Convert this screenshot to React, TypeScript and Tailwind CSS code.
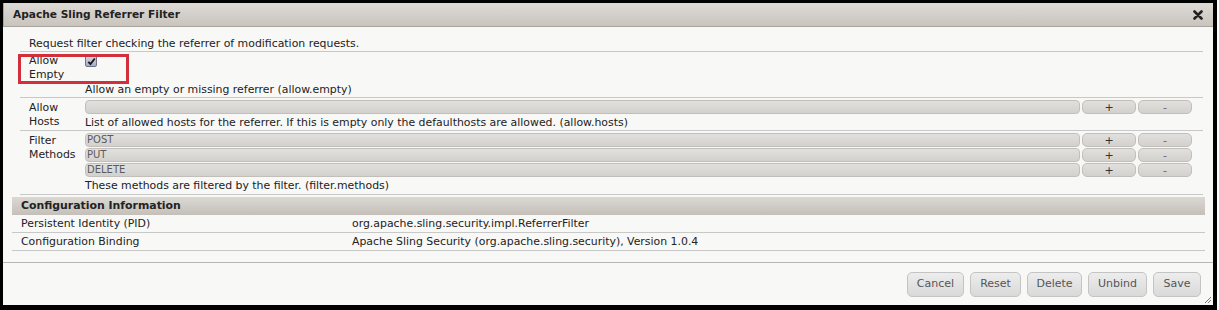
import React from "react";

const font = { fontFamily: '"DejaVu Sans", "Liberation Sans", sans-serif' };

function Bar({ text }: { text?: string }) {
  return (
    <div className="mb-[1px] flex h-[14px] gap-[2px]">
      <div className="flex-1 rounded-[4px] border border-[#c2bfbb] bg-gradient-to-b from-[#e2e0dd] to-[#d3d1ce] pl-[1px] text-[10px] leading-[12px] text-[#5a5a5a]">
        {text}
      </div>
      <div className="flex w-[54px] items-center justify-center rounded-[5px] border border-[#c2bfbb] bg-gradient-to-b from-[#e2e0dd] to-[#d3d1ce] text-[11px] leading-none text-[#333]">
        +
      </div>
      <div className="flex w-[54px] items-center justify-center rounded-[5px] border border-[#c2bfbb] bg-gradient-to-b from-[#e2e0dd] to-[#d3d1ce] text-[11px] leading-none text-[#666]">
        -
      </div>
    </div>
  );
}

function Btn({ label, w }: { label: string; w: string }) {
  return (
    <div
      className={`${w} flex h-[25px] items-center justify-center rounded-[5px] border border-[#c4c4c4] bg-gradient-to-b from-[#ededed] to-[#d9d9d9] text-[11px] text-[#555]`}
    >
      {label}
    </div>
  );
}

export default function App() {
  return (
    <div className="h-[310px] w-[1219px] bg-white" style={font}>
      <div className="flex h-[310px] w-[1217px] flex-col border-b-[5px] border-l-[3px] border-r-[4px] border-t-[3px] border-black bg-[#f8f8f7]">
        {/* title */}
        <div className="flex h-[24px] shrink-0 items-center justify-between border-b border-l border-[#a9a49e] bg-gradient-to-b from-[#dedad6] to-[#c9c4be] pl-[9px] pr-[10px] pt-[1px]">
          <span className="text-[10.6px] font-bold text-[#222]">Apache Sling Referrer Filter</span>
          <svg width="10" height="10" viewBox="0 0 10 10">
            <path d="M1.5 1.5 L8.5 8.5 M8.5 1.5 L1.5 8.5" stroke="#222" strokeWidth="2.6" strokeLinecap="round" />
          </svg>
        </div>

        <div className="flex-1 pt-[9px]">
          {/* form */}
          <div className="ml-[17px] mr-[10px] text-[10.9px] text-[#222]">
            <div className="flex h-[16px] items-center border-b border-[#c8c8c8] pl-[9px] pt-[1px]">
              Request filter checking the referrer of modification requests.
            </div>

            <div className="relative flex h-[46px] border-b border-[#c8c8c8]">
              <div className="absolute left-[-2px] top-[2px] h-[30px] w-[111px] border-[3px] border-[#d12f3b]" />
              <div className="w-[65px] shrink-0 pl-[9px] pt-[2px] leading-[14px]">
                Allow
                <br />
                Empty
              </div>
              <div className="flex flex-col">
                <div className="mt-[3px] flex h-[12px] w-[12px] items-center justify-center rounded-[2px] border border-[#6e7489] bg-gradient-to-b from-[#d3d7e6] to-[#a9aec6]">
                  <svg width="9" height="9" viewBox="0 0 9 9">
                    <path d="M1.3 4.8 L3.5 7 L7.8 1.5" stroke="#1c1c1c" strokeWidth="1.9" fill="none" />
                  </svg>
                </div>
                <div className="mt-[16px] leading-[14px]">Allow an empty or missing referrer (allow.empty)</div>
              </div>
            </div>

            <div className="flex h-[33px] border-b border-[#c8c8c8]">
              <div className="w-[65px] shrink-0 pl-[9px] pt-[3px] leading-[14px]">
                Allow
                <br />
                Hosts
              </div>
              <div className="mr-[11px] flex flex-1 flex-col pt-[2px]">
                <Bar />
                <div className="pt-[1px] leading-[14px]">
                  List of allowed hosts for the referrer. If this is empty only the defaulthosts are allowed. (allow.hosts)
                </div>
              </div>
            </div>

            <div className="flex h-[64px] border-b border-[#c8c8c8]">
              <div className="w-[65px] shrink-0 pl-[9px] pt-[3px] leading-[14px]">
                Filter
                <br />
                Methods
              </div>
              <div className="mr-[11px] flex flex-1 flex-col pt-[2px]">
                <Bar text="POST" />
                <Bar text="PUT" />
                <Bar text="DELETE" />
                <div className="pt-[1px] leading-[14px]">These methods are filtered by the filter. (filter.methods)</div>
              </div>
            </div>
          </div>

          {/* configuration info */}
          <div className="ml-[9px] mr-[8px] mt-[2px] text-[10.9px] text-[#222]">
            <div className="flex h-[18px] items-center bg-gradient-to-b from-[#dcd8d3] to-[#c4bfb9] pl-[9px] pt-[1px] font-bold">
              Configuration Information
            </div>
            <div className="flex h-[18px] items-center border-b border-[#c8c8c8] pl-[9px] pt-[2px]">
              <span className="w-[331px]">Persistent Identity (PID)</span>
              <span>org.apache.sling.security.impl.ReferrerFilter</span>
            </div>
            <div className="flex h-[18px] items-center border-b border-[#c8c8c8] pl-[9px] pt-[2px]">
              <span className="w-[331px]">Configuration Binding</span>
              <span>Apache Sling Security (org.apache.sling.security), Version 1.0.4</span>
            </div>
          </div>
        </div>

        {/* buttons */}
        <div className="relative flex h-[43px] shrink-0 items-start justify-end gap-[6px] border-t border-[#b5b5b5] pr-[12px] pt-[9px]">
          <Btn label="Cancel" w="w-[57px]" />
          <Btn label="Reset" w="w-[51px]" />
          <Btn label="Delete" w="w-[55px]" />
          <Btn label="Unbind" w="w-[59px]" />
          <Btn label="Save" w="w-[48px]" />
          <svg className="absolute bottom-[1px] right-[1px]" width="8" height="8" viewBox="0 0 8 8">
            <path d="M7 1 L1 7 M7 4 L4 7" stroke="#777" strokeWidth="1" />
          </svg>
        </div>
      </div>
    </div>
  );
}
